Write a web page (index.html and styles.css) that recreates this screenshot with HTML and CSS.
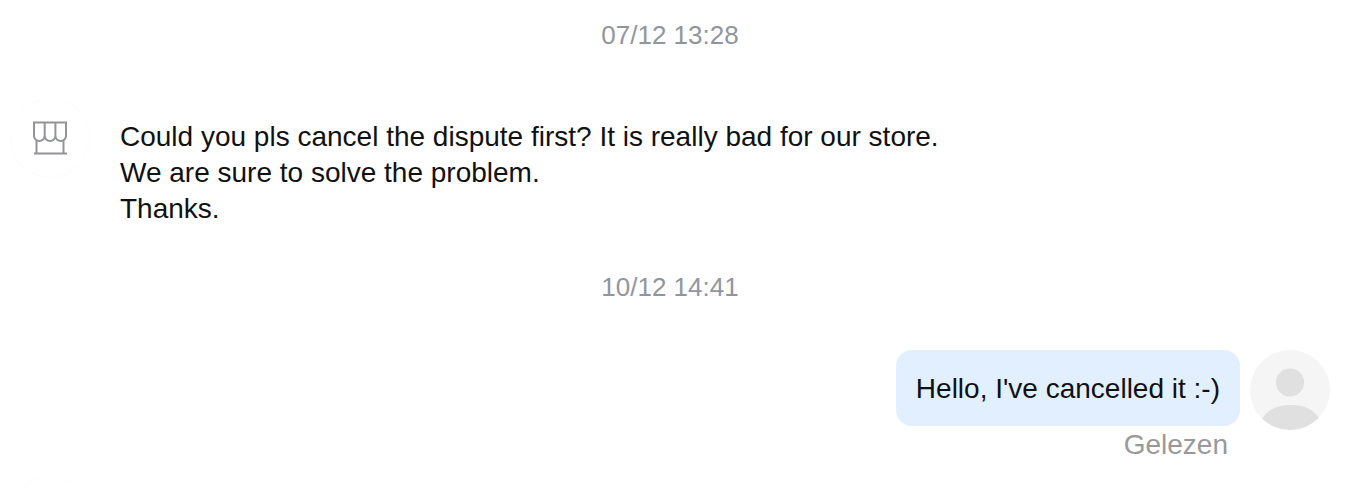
FILE: index.html
```
<!DOCTYPE html>
<html lang="nl">
<head>
    <meta charset="UTF-8">
    <meta name="viewport" content="width=device-width, initial-scale=1.0">
    <title>Berichten</title>
    <link rel="stylesheet" href="styles.css">
</head>
<body>
    <main class="chat">
        <time class="date">07/12 13:28</time>

        <div class="message">
            <div class="avatar store">
                <svg viewBox="0 0 80 80" fill="none" stroke="#939499" stroke-width="2" aria-hidden="true">
                    <path d="M24 24.500h32v13.500a5.300 5 0 0 1-10.600 0a5.300 5 0 0 1-10.700 0a5.300 5 0 0 1-10.700 0z"/>
                    <path d="M34.700 24.500v14M45.400 24.500v14M26.500 42.500v13M53.500 42.500v13M24 55.500h33"/>
                </svg>
            </div>
            <p class="bubble">Could you pls cancel the dispute first? It is really bad for our store.<br>We are sure to solve the problem.<br>Thanks.</p>
        </div>

        <time class="date">10/12 14:41</time>

        <div class="message own">
            <div class="content">
                <p class="bubble">Hello, I've cancelled it :-)</p>
                <span class="status">Gelezen</span>
            </div>
            <div class="avatar user">
                <svg viewBox="0 0 80 80" fill="#e0e0e0" aria-hidden="true">
                    <circle cx="40" cy="32.500" r="14"/>
                    <path d="M12 69C18 59 28 55 41 55s22 4 28 13v12H12z"/>
                </svg>
            </div>
        </div>

        <!-- next message from the store -->
        <div class="message">
            <div class="avatar store"></div>
        </div>
    </main>
</body>
</html>
```

FILE: styles.css
```
* {
    box-sizing: border-box;
}

body {
    margin: 0;
    height: 100vh;
    overflow: hidden;
    background-color: #fff;
    font-family: "Liberation Sans", Helvetica, Arial, sans-serif;
    font-size: 28px;
    line-height: 36px;
    color: #111;
}

.chat {
    padding: 17px 28px 0 10px;
}

.date {
    display: block;
    margin-bottom: 45px;
    text-align: center;
    font-size: 26px;
    color: #91969e;
}

.message {
    display: flex;
    align-items: flex-start;
    gap: 10px;
    margin-bottom: 23px;
}

.own {
    justify-content: flex-end;
    margin-bottom: 13px;
}

.avatar {
    flex: none;
    width: 80px;
    height: 80px;
    border-radius: 50%;
    overflow: hidden;
}

.avatar svg {
    display: block;
}

.store {
    box-shadow: inset 0 0 0 1px #fcfcfc;
}

.user {
    background-color: #f5f5f5;
}

.content {
    display: flex;
    flex-direction: column;
    align-items: flex-end;
}

.bubble {
    margin: 0;
    padding: 21px 20px 19px;
    border-radius: 16px;
}

.own .bubble {
    background-color: #e1efff;
}

.status {
    padding: 1px 12px 0 0;
    color: #999;
}
```
